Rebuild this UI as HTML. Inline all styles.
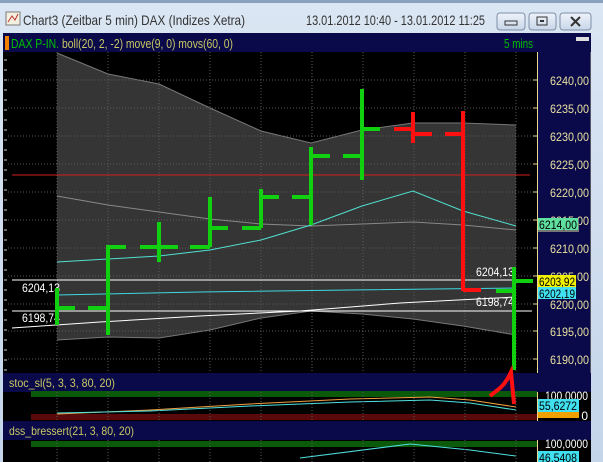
<!DOCTYPE html>
<html><head><meta charset="utf-8"><style>
html,body{margin:0;padding:0;width:603px;height:462px;overflow:hidden;background:#c9d9ec}
svg{display:block}
text{font-family:"Liberation Sans",sans-serif}
</style></head><body>
<svg width="603" height="462" xmlns="http://www.w3.org/2000/svg">
<defs>
<linearGradient id="tb" x1="0" y1="0" x2="0" y2="1"><stop offset="0" stop-color="#dbe6f3"/><stop offset="1" stop-color="#c4d5ea"/></linearGradient>
<linearGradient id="btn" x1="0" y1="0" x2="0" y2="1"><stop offset="0" stop-color="#eef3fa"/><stop offset="1" stop-color="#c8d6e8"/></linearGradient>
</defs>
<rect x="0" y="0" width="603" height="462" fill="url(#tb)"/>
<rect x="0" y="0" width="603" height="3" fill="#8aa0bc"/>
<rect x="6" y="12" width="14" height="13" fill="#f4f0e0" stroke="#7a7a7a"/>
<path d="M8 22 L12 16 L15 20 L18 14" stroke="#c03030" fill="none"/>
<text x="23" y="25" font-size="14" fill="#333" textLength="222" lengthAdjust="spacingAndGlyphs">Chart3 (Zeitbar 5 min)  DAX (Indizes Xetra)</text>
<text x="306" y="25" font-size="14" fill="#333" textLength="179" lengthAdjust="spacingAndGlyphs">13.01.2012 10:40 - 13.01.2012 11:25</text>
<rect x="497" y="13" width="28" height="17" rx="3" fill="url(#btn)" stroke="#7d8ea8"/>
<rect x="505" y="21" width="12" height="4" fill="none" stroke="#333"/>
<rect x="529" y="13" width="27" height="17" rx="3" fill="url(#btn)" stroke="#7d8ea8"/>
<rect x="537" y="17" width="10" height="8" fill="none" stroke="#333"/><rect x="540" y="20" width="4" height="2" fill="#333"/>
<rect x="560" y="13" width="31" height="17" rx="3" fill="url(#btn)" stroke="#7d8ea8"/>
<path d="M571 17 L580 26 M580 17 L571 26" stroke="#333" stroke-width="2"/>
<rect x="3" y="33" width="588" height="429" fill="#000"/>
<rect x="3" y="33" width="588" height="19" fill="#0a0a4a"/>
<rect x="5" y="36" width="4" height="14" fill="#f08000"/>
<text x="11" y="48" font-size="13" fill="#00c000" textLength="48" lengthAdjust="spacingAndGlyphs">DAX P-IN.</text>
<text x="62" y="48" font-size="13" fill="#c8c864" textLength="171" lengthAdjust="spacingAndGlyphs">boll(20, 2, -2) move(9, 0) movs(60, 0)</text>
<text x="504" y="48" font-size="13" fill="#00c000" textLength="29" lengthAdjust="spacingAndGlyphs">5 mins</text>
<rect x="576" y="37" width="13" height="4" fill="#ddd"/>
<rect x="538" y="52" width="53" height="321" fill="#0a0a4a"/>
<line x1="537.5" y1="52" x2="537.5" y2="373" stroke="#e8d890"/>
<line x1="590.5" y1="52" x2="590.5" y2="373" stroke="#556"/>
<g stroke="#e8d890">
<path d="M533 80h4M533 108h4M533 136h4M533 164h4M533 192h4M533 220h4M533 248h4M533 276h4M533 304h4M533 331h4M533 359h4"/>
<path d="M4 60h3M4 70h3M4 80h3M4 90h3M4 100h3M4 110h3M4 120h3M4 130h3M4 140h3M4 150h3M4 160h3M4 170h3M4 180h3M4 190h3M4 200h3M4 210h3M4 220h3M4 230h3M4 240h3M4 250h3M4 260h3M4 270h3M4 280h3M4 290h3M4 300h3M4 310h3M4 320h3M4 330h3M4 340h3M4 350h3M4 360h3M4 370h3" stroke="#ccc"/>
</g>
<polygon points="57,53 108,74 159,84 210,108 261,131 311,143 362,130 413,123 463,123 516,125 516,335 463,326 413,319 362,314 311,311 261,318 210,330 159,338 108,337 57,340" fill="#353535"/>
<polyline points="57,53 108,74 159,84 210,108 261,131 311,143 362,130 413,123 463,123 516,125" fill="none" stroke="#777"/>
<polyline points="57,340 108,337 159,338 210,330 261,318 311,311 362,314 413,319 463,326 516,335" fill="none" stroke="#777"/>
<g stroke="#5a5a5a" stroke-dasharray="1,2">
<path d="M57 52V373M108 52V373M159 52V373M210 52V373M261 52V373M312 52V373M363 52V373M414 52V373M465 52V373M516 52V373"/>
<path d="M8 80H532M8 108H532M8 136H532M8 164H532M8 192H532M8 220H532M8 248H532M8 276H532M8 304H532M8 331H532M8 359H532"/>
</g>
<line x1="12" y1="175" x2="530" y2="175" stroke="#d02020"/>
<polyline points="57,196 108,205 159,212 210,219 261,224 311,226 362,224 413,222 463,225 516,230" fill="none" stroke="#888"/>
<polyline points="57,262 108,259 159,256 210,250 261,240 311,225 362,206 413,191 463,211 516,226" fill="none" stroke="#50e0d0"/>
<line x1="12" y1="280" x2="532" y2="280" stroke="#fff"/>
<line x1="12" y1="311" x2="532" y2="311" stroke="#fff"/>
<polyline points="57,295 200,292 350,290 516,288" fill="none" stroke="#40d8e0"/>
<polyline points="12,328 100,322 200,316 300,311 400,303 516,297" fill="none" stroke="#fff"/>
<g font-size="12" fill="#fff">
<text x="22" y="292" textLength="38" lengthAdjust="spacingAndGlyphs">6204,13</text><text x="22" y="322" textLength="38" lengthAdjust="spacingAndGlyphs">6198,74</text>
<text x="476" y="276" textLength="38" lengthAdjust="spacingAndGlyphs">6204,13</text><text x="476" y="306" textLength="38" lengthAdjust="spacingAndGlyphs">6198,74</text>
</g>
<g stroke="#10d010" stroke-width="4" fill="none">
<path d="M57 288V325M57 308H75M88 308H108"/>
<path d="M108 245V335M108 247H126M140 247H178M159 222V262"/>
<path d="M190 247H210M210 197V247M210 228H228"/>
<path d="M242 228H261M261 189V228M261 197H279"/>
<path d="M292 197H311M311 147V225M311 156H330"/>
<path d="M343 156H362M362 89V180M362 129H380"/>
<path d="M496 291H514M514 267V370M514 281H533"/>
</g>
<g stroke="#ff1010" stroke-width="4" fill="none">
<path d="M394 129H413M413 112V143M413 134H432"/>
<path d="M445 134H463M463 111V291M463 290H481"/>
</g>
<g font-size="12" fill="#e8e0a0">
<text x="550" y="85" textLength="39" lengthAdjust="spacingAndGlyphs">6240,00</text><text x="550" y="113" textLength="39" lengthAdjust="spacingAndGlyphs">6235,00</text><text x="550" y="141" textLength="39" lengthAdjust="spacingAndGlyphs">6230,00</text>
<text x="550" y="169" textLength="39" lengthAdjust="spacingAndGlyphs">6225,00</text><text x="550" y="197" textLength="39" lengthAdjust="spacingAndGlyphs">6220,00</text><text x="550" y="225" textLength="39" lengthAdjust="spacingAndGlyphs">6215,00</text>
<text x="550" y="253" textLength="39" lengthAdjust="spacingAndGlyphs">6210,00</text><text x="550" y="281" textLength="39" lengthAdjust="spacingAndGlyphs">6205,00</text><text x="550" y="309" textLength="39" lengthAdjust="spacingAndGlyphs">6200,00</text>
<text x="550" y="336" textLength="39" lengthAdjust="spacingAndGlyphs">6195,00</text><text x="550" y="364" textLength="39" lengthAdjust="spacingAndGlyphs">6190,00</text>
</g>
<rect x="538" y="222" width="41" height="10" fill="#777"/>
<rect x="538" y="218" width="40" height="12" fill="#60e0a0"/><text x="539" y="229" font-size="12" fill="#000" textLength="38" lengthAdjust="spacingAndGlyphs">6214,00</text>
<rect x="538" y="275" width="38" height="12" fill="#f0f000"/><text x="539" y="286" font-size="12" fill="#000" textLength="36" lengthAdjust="spacingAndGlyphs">6203,92</text>
<rect x="538" y="287" width="38" height="12" fill="#40e0f0"/><text x="539" y="298" font-size="12" fill="#000" textLength="36" lengthAdjust="spacingAndGlyphs">6202,19</text>
<rect x="3" y="373" width="588" height="19" fill="#0a0a4a"/>
<text x="9" y="387" font-size="12" fill="#c8c864" textLength="106" lengthAdjust="spacingAndGlyphs">stoc_sl(5, 3, 3, 80, 20)</text>
<rect x="31" y="391" width="506" height="6" fill="#0a5a0a"/>
<rect x="31" y="414" width="506" height="6" fill="#5a0a0a"/>
<polyline points="57,414 150,410 250,404 350,399 430,397 470,400 516,407" fill="none" stroke="#f0a040"/>
<polyline points="57,413 150,411 250,406 350,402 430,400 470,403 516,410" fill="none" stroke="#50e0e0"/>
<path d="M490 396 L500 388 L504 384 L508 378 L511 372 L514 404" stroke="#ff1010" stroke-width="4" fill="none"/>
<rect x="538" y="392" width="53" height="29" fill="#000"/>
<line x1="537.5" y1="392" x2="537.5" y2="421" stroke="#e8d890"/>
<text x="545" y="400" font-size="12" fill="#fff" textLength="43" lengthAdjust="spacingAndGlyphs">100,0000</text>
<rect x="538" y="412" width="41" height="6" fill="#f0a000"/>
<rect x="538" y="399" width="41" height="13" fill="#40e0f0"/><text x="539" y="410" font-size="12" fill="#000" textLength="38" lengthAdjust="spacingAndGlyphs">55,6272</text>
<text x="588" y="420" font-size="12" fill="#fff" text-anchor="end">0</text>
<rect x="3" y="421" width="588" height="19" fill="#0a0a4a"/>
<text x="9" y="435" font-size="12" fill="#c8c864" textLength="125" lengthAdjust="spacingAndGlyphs">dss_bressert(21, 3, 80, 20)</text>
<rect x="31" y="441" width="506" height="6" fill="#0a5a0a"/>
<polyline points="300,458 410,444 470,450 516,456" fill="none" stroke="#50e0e0"/>
<line x1="537.5" y1="440" x2="537.5" y2="462" stroke="#e8d890"/>
<text x="545" y="448" font-size="12" fill="#fff" textLength="43" lengthAdjust="spacingAndGlyphs">100,0000</text>
<rect x="538" y="451" width="41" height="11" fill="#40e0f0"/><text x="539" y="462" font-size="12" fill="#000" textLength="38" lengthAdjust="spacingAndGlyphs">46,5408</text>
<g stroke="#5a5a5a" stroke-dasharray="1,2">
<path d="M57 392V421M108 392V421M159 392V421M210 392V421M261 392V421M312 392V421M363 392V421M414 392V421M465 392V421M516 392V421"/>
<path d="M57 440V462M108 440V462M159 440V462M210 440V462M261 440V462M312 440V462M363 440V462M414 440V462M465 440V462M516 440V462"/>
</g>
</svg>
</body></html>
